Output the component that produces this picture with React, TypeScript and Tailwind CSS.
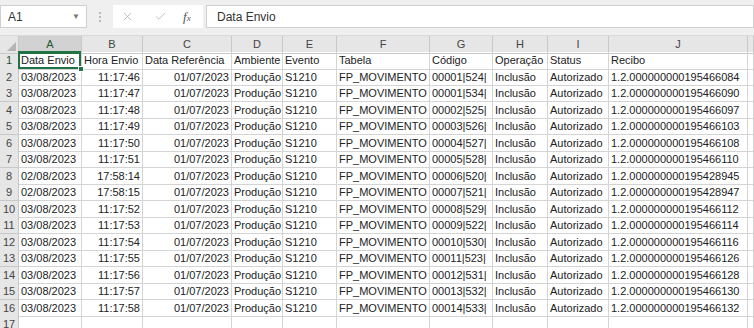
import { X, Check } from 'lucide-react';

const cols = ['A', 'B', 'C', 'D', 'E', 'F', 'G', 'H', 'I', 'J', ''];

const rows = [
  ['03/08/2023', '11:17:46', '00001|524|', '195466084'],
  ['03/08/2023', '11:17:47', '00001|534|', '195466090'],
  ['03/08/2023', '11:17:48', '00002|525|', '195466097'],
  ['03/08/2023', '11:17:49', '00003|526|', '195466103'],
  ['03/08/2023', '11:17:50', '00004|527|', '195466108'],
  ['03/08/2023', '11:17:51', '00005|528|', '195466110'],
  ['02/08/2023', '17:58:14', '00006|520|', '195428945'],
  ['02/08/2023', '17:58:15', '00007|521|', '195428947'],
  ['03/08/2023', '11:17:52', '00008|529|', '195466112'],
  ['03/08/2023', '11:17:53', '00009|522|', '195466114'],
  ['03/08/2023', '11:17:54', '00010|530|', '195466116'],
  ['03/08/2023', '11:17:55', '00011|523|', '195466126'],
  ['03/08/2023', '11:17:56', '00012|531|', '195466128'],
  ['03/08/2023', '11:17:57', '00013|532|', '195466130'],
  ['03/08/2023', '11:17:58', '00014|533|', '195466132'],
];

const grid = 'grid grid-cols-[19px_63px_61px_89px_51px_54px_93px_63px_55px_61px_139px_1fr]';
const cell = 'border-r border-b border-[#d4d4d4] px-[2px] whitespace-nowrap overflow-hidden leading-[17px]';
const rowHead = 'bg-[#e6e6e6] border-r border-b border-[#c8c8c8] text-[#444] text-center leading-[16px]';

function Row({ n, cells }: { n: number; cells: string[] }) {
  return (
    <div className={`${grid} h-[16.5px]`}>
      <div className={rowHead}>{n}</div>
      <div className={cell}>{cells[0]}</div>
      <div className={`${cell} text-right`}>{cells[1]}</div>
      <div className={`${cell} text-right`}>01/07/2023</div>
      <div className={cell}>Produção</div>
      <div className={cell}>S1210</div>
      <div className={cell}>FP_MOVIMENTO</div>
      <div className={cell}>{cells[2]}</div>
      <div className={cell}>Inclusão</div>
      <div className={cell}>Autorizado</div>
      <div className={cell}>1.2.000000000{cells[3]}</div>
      <div className={cell}></div>
    </div>
  );
}

export default function App() {
  return (
    <div className="w-[754px] h-[328px] overflow-hidden bg-white text-[11px] text-[#222] font-['Liberation_Sans',Arial,sans-serif]">
      {/* formula bar */}
      <div className="h-[35px] bg-[#efefef] flex items-start pt-[5px]">
        <div className="w-[87px] h-[23px] bg-white border border-[#d0d0d0] flex items-center justify-between pl-[7px] pr-[6px] text-[12px] text-[#333]">
          <span>A1</span>
          <span className="text-[8px] text-[#777]">▼</span>
        </div>
        <div className="w-[26px] h-[23px] flex flex-col items-center justify-center gap-[2px]">
          <span className="w-[2px] h-[2px] bg-[#bbb]" />
          <span className="w-[2px] h-[2px] bg-[#bbb]" />
          <span className="w-[2px] h-[2px] bg-[#bbb]" />
        </div>
        <div className="w-[90px] h-[23px] bg-white flex items-center">
          <X size={13} strokeWidth={1.3} className="ml-[8px] text-[#a8a8a8]" />
          <Check size={13} strokeWidth={1.3} className="ml-[20px] text-[#a8a8a8]" />
          <span className="ml-[16px] italic text-[13px] text-[#555] font-['Liberation_Serif',serif]">f<span className="text-[9px]">x</span></span>
        </div>
        <div className="flex-1 h-[23px] ml-[3px] bg-white border border-[#d0d0d0] flex items-center pl-[10px] text-[12px] text-[#333]">
          Data Envio
        </div>
      </div>

      {/* column headers */}
      <div className={`${grid} h-[17px] bg-[#e6e6e6] border-t border-[#dadada]`}>
        <div className="relative border-r border-b border-[#c8c8c8]">
          <span className="absolute right-[2px] bottom-[2px] w-0 h-0 border-l-[9px] border-l-transparent border-b-[9px] border-b-[#b4b4b4]" />
        </div>
        {cols.map((c, i) => (
          <div
            key={i}
            className={`text-center leading-[16px] text-[#444] border-r border-[#c8c8c8] ${
              i === 0 ? 'bg-[#d2d2d2] border-b-2 border-b-[#217346] text-[#215732]' : 'border-b'
            }`}
          >
            {c}
          </div>
        ))}
      </div>

      {/* header row 1 */}
      <div className={`${grid} h-[16.5px]`}>
        <div className={`${rowHead} bg-[#d2d2d2] text-[#215732]`}>1</div>
        <div className={`${cell} relative overflow-visible`}>
          Data Envio
          <span className="absolute -left-[1px] -top-[1px] right-0 bottom-0 border-2 border-[#217346]" />
          <span className="absolute -right-[3px] -bottom-[3px] w-[6px] h-[6px] bg-[#217346] border border-white" />
        </div>
        <div className={cell}>Hora Envio</div>
        <div className={cell}>Data Referência</div>
        <div className={cell}>Ambiente</div>
        <div className={cell}>Evento</div>
        <div className={cell}>Tabela</div>
        <div className={cell}>Código</div>
        <div className={cell}>Operação</div>
        <div className={cell}>Status</div>
        <div className={cell}>Recibo</div>
        <div className={cell}></div>
      </div>

      {rows.map((r, i) => (
        <Row key={i} n={i + 2} cells={r} />
      ))}

      <div className={`${grid} h-[16.5px]`}>
        <div className={rowHead}>17</div>
        {cols.map((_, i) => (
          <div key={i} className={cell}></div>
        ))}
      </div>
    </div>
  );
}
